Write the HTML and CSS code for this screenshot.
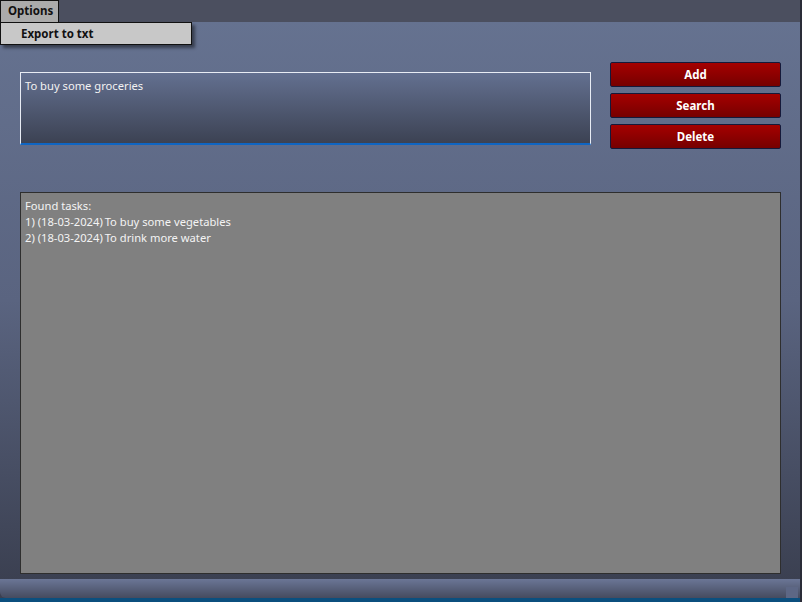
FILE: index.html
```html
<!DOCTYPE html>
<html>
<head>
<meta charset="utf-8">
<link rel="stylesheet" href="styles.css">
</head>
<body>
<div class="screen">
  <div class="window">
    <div class="menubar">
      <div class="menu-item">Options</div>
    </div>
    <div class="dropdown">Export to txt</div>
    <div class="main">
      <div class="top-row">
        <div class="input">To buy some groceries</div>
        <div class="buttons">
          <div class="btn">Add</div>
          <div class="btn">Search</div>
          <div class="btn">Delete</div>
        </div>
      </div>
      <div class="results">
        <div>Found tasks:</div>
        <div>1) (18-03-2024)&#8201;To buy some vegetables</div>
        <div>2) (18-03-2024)&#8201;To drink more water</div>
      </div>
    </div>
    <div class="statusbar"><div class="grip"></div></div>
    <div class="bottom-line"></div>
  </div>
  <div class="edge"></div>
</div>
</body>
</html>
```
FILE: styles.css
```css
html, body {
  margin: 0;
  padding: 0;
  width: 802px;
  height: 602px;
  overflow: hidden;
  background: #2b2d3a;
  font-family: "Noto Sans", "Open Sans", sans-serif;
}

.screen {
  display: flex;
  width: 802px;
  height: 602px;
}

.window {
  position: relative;
  width: 800px;
  height: 602px;
  display: flex;
  flex-direction: column;
  background: linear-gradient(#667391 0px, #5a6480 300px, #3b4051 580px);
}

.edge {
  width: 2px;
  height: 602px;
  background: #2a2c38;
}

.menubar {
  height: 22px;
  background: #4b4f5f;
  display: flex;
  box-sizing: border-box;
}

.menu-item {
  width: 59px;
  height: 22px;
  box-sizing: border-box;
  background: #ababab;
  border: 1px solid #111;
  border-bottom: none;
  font-size: 11.5px;
  font-weight: bold;
  color: #111;
  padding-left: 7px;
  line-height: 20px;
}

.dropdown {
  position: absolute;
  top: 22px;
  left: 0;
  width: 192px;
  height: 23px;
  box-sizing: border-box;
  background: #c8c8c8;
  border: 1px solid #111;
  font-size: 11.5px;
  font-weight: bold;
  color: #111;
  padding-left: 20px;
  line-height: 21px;
  box-shadow: 3px 3px 3px rgba(0,0,0,0.45);
}

.main {
  flex: 1;
  display: flex;
  flex-direction: column;
  padding: 40px 19px 0 20px;
  box-sizing: border-box;
}

.top-row {
  display: flex;
  align-items: flex-start;
  gap: 19px;
}

.input {
  margin-top: 10px;
  width: 571px;
  height: 73px;
  box-sizing: border-box;
  border: 1px solid #e8ecf4;
  border-bottom: 2px solid #0f65c2;
  background: linear-gradient(#637090, #3c4253);
  color: #f2f2f2;
  font-size: 11.2px;
  padding: 5px 4px;
  line-height: 16px;
}

.buttons {
  display: flex;
  flex-direction: column;
  gap: 6px;
  width: 171px;
}

.btn {
  height: 25px;
  box-sizing: border-box;
  border: 1px solid #15193a;
  border-radius: 2px;
  background: linear-gradient(#a50000, #760000);
  color: #fff;
  font-size: 11.5px;
  font-weight: bold;
  text-align: center;
  line-height: 23px;
}

.results {
  margin-top: 43px;
  height: 382px;
  box-sizing: border-box;
  background: #808080;
  border: 1px solid #2e2e2e;
  color: #f4f4f4;
  font-size: 11.2px;
  line-height: 16px;
  padding: 5px 4px;
}

.statusbar {
  position: relative;
  margin-top: 5px;
  height: 20px;
  background: linear-gradient(#6b7696, #454b5f);
  border-bottom-left-radius: 6px;
}

.grip {
  position: absolute;
  right: 2px;
  bottom: 0;
  width: 12px;
  height: 11px;
  background: #5d6785;
}

.bottom-line {
  height: 4px;
  background: #0b4f7e;
}
```
